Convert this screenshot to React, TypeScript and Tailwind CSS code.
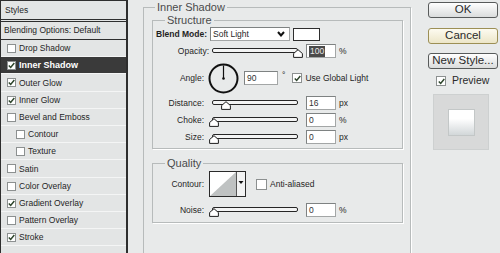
import React from 'react';

type Row = { label: string; checked?: boolean; active?: boolean; indent?: boolean };

const rows: Row[] = [
  { label: 'Drop Shadow' },
  { label: 'Inner Shadow', checked: true, active: true },
  { label: 'Outer Glow', checked: true },
  { label: 'Inner Glow', checked: true },
  { label: 'Bevel and Emboss' },
  { label: 'Contour', indent: true },
  { label: 'Texture', indent: true },
  { label: 'Satin' },
  { label: 'Color Overlay' },
  { label: 'Gradient Overlay', checked: true },
  { label: 'Pattern Overlay' },
  { label: 'Stroke', checked: true },
];

const Check = ({ checked, size = 'w-[9px] h-[9px]' }: { checked?: boolean; size?: string }) => (
  <span className={`${size} shrink-0 border border-[#8c9090] bg-white flex items-center justify-center`}>
    {checked && (
      <svg width="7" height="7" viewBox="0 0 7 7">
        <path d="M0.8 3.4 L2.7 5.4 L6.3 1.1" stroke="#2d452b" strokeWidth="1.5" fill="none" />
      </svg>
    )}
  </span>
);

// track is 86px wide, thumb class places the little house-shaped knob
const Slider = ({ thumb }: { thumb: string }) => (
  <div className="relative w-[86px] h-[14px] shrink-0">
    <div className="absolute left-0 right-0 top-[4px] h-[5px] border border-[#262626] rounded-[2px] bg-[#f3f4f4]" />
    <svg className={`absolute top-[5px] ${thumb}`} width="10" height="9" viewBox="0 0 10 9">
      <path d="M5 0.7 L9.4 4.5 L9.4 8.4 L0.6 8.4 L0.6 4.5 Z" fill="#fff" stroke="#1e1e1e" strokeWidth="1" />
    </svg>
  </div>
);

const Field = ({ value, w = 'w-[30px]', selected }: { value: string; w?: string; selected?: boolean }) => (
  <div className={`${w} h-[14px] shrink-0 bg-white border border-[#a3a6a6] border-t-[#7e8282] border-l-[#7e8282] flex items-center pl-[2px] text-[8.5px]`}>
    {selected ? <span className="bg-[#4a4a4a] text-[#e8e8e8] px-[1px] leading-[11px]">{value}</span> : <span className="text-[#333]">{value}</span>}
  </div>
);

const Label = ({ text, w = 'w-[51px]', bold }: { text: string; w?: string; bold?: boolean }) => (
  <span className={`${w} shrink-0 text-right text-[8.5px] ${bold ? 'font-bold' : ''}`}>{text}</span>
);

const Btn = ({ children, cancel }: { children: React.ReactNode; cancel?: boolean }) => (
  <div
    className={`h-[16px] w-[70px] rounded-[3px] border flex items-center justify-center text-[11.5px] leading-none text-[#2a2a2a] ${
      cancel
        ? 'border-[#9c8f55] bg-linear-to-b from-[#fdfbf0] to-[#ece6c8]'
        : 'border-[#585b5b] bg-linear-to-b from-white to-[#dadcdc]'
    }`}
  >
    {children}
  </div>
);

export default function App() {
  return (
    <div className="w-[500px] h-[253px] overflow-hidden bg-[#e8eaea] flex font-['Liberation_Sans',Arial,sans-serif] text-[#1f1f1f]">
      {/* styles list */}
      <div className="w-[128px] h-full shrink-0 border-l border-t border-r-2 border-[#2e2e2e] bg-[#e3e5e5] flex flex-col">
        <div className="h-[21px] px-[4px] flex items-center text-[8.5px] border-b-[3px] border-double border-[#2e2e2e]">Styles</div>
        <div className="h-[18px] px-[3px] flex items-center text-[8.5px] border-b border-[#2e2e2e]">Blending Options: Default</div>
        {rows.map((r) => (
          <div
            key={r.label}
            className={`h-[17.2px] flex items-center shadow-[inset_0_-1px_0_#f4f5f5] ${r.indent ? 'pl-[15px]' : 'pl-[6px]'} ${
              r.active ? 'bg-[#3a3a3a] text-white font-bold text-[9px]' : 'text-[8.5px]'
            }`}
          >
            <Check checked={r.checked} />
            <span className={r.active ? 'ml-[3px]' : 'ml-[3px]'}>{r.label}</span>
          </div>
        ))}
      </div>

      {/* settings */}
      <fieldset className="ml-[15px] mt-[1px] w-[268px] h-[270px] shrink-0 border border-[#b7bbbb] shadow-[1px_1px_0_#fff]">
        <legend className="ml-[11px] px-[2px] text-[11px] leading-[13px] text-[#4a4a4a]">Inner Shadow</legend>

        <fieldset className="ml-[8px] w-[251px] pb-[4px] border border-[#b7bbbb] shadow-[1px_1px_0_#fff]">
          <legend className="ml-[12px] px-[2px] text-[11px] leading-[13px] text-[#4a4a4a]">Structure</legend>

          <div className="flex items-center h-[14px]">
            <Label text="Blend Mode:" w="w-[54px]" bold />
            <div className="ml-[3px] w-[80px] h-[14px] shrink-0 bg-white border border-[#a3a6a6] border-t-[#7e8282] border-l-[#7e8282] flex items-center justify-between pl-[2px] pr-[4px] text-[8.5px]">
              <span>Soft Light</span>
              <svg width="8" height="6" viewBox="0 0 8 6">
                <path d="M1 1 L4 4.5 L7 1" stroke="#111" strokeWidth="2" fill="none" />
              </svg>
            </div>
            <div className="ml-[3px] w-[27px] h-[13px] shrink-0 bg-white border border-[#2e2e2e]" />
          </div>

          <div className="flex items-center h-[14px] mt-[3px]">
            <Label text="Opacity:" w="w-[56px]" />
            <div className="ml-[3px]">
              <Slider thumb="left-[81px]" />
            </div>
            <div className="ml-[8px]">
              <Field value="100" selected />
            </div>
            <span className="ml-[3px] text-[8.5px]">%</span>
          </div>

          <div className="flex items-center h-[34px] mt-[3px]">
            <Label text="Angle:" />
            <svg className="ml-[4px] shrink-0" width="31" height="31" viewBox="0 0 31 31">
              <circle cx="15.5" cy="15.5" r="14" fill="none" stroke="#111" strokeWidth="2" />
              <line x1="15.5" y1="15.5" x2="15.5" y2="2.5" stroke="#111" strokeWidth="1.2" />
              <circle cx="15.5" cy="15.5" r="1.3" fill="#111" />
            </svg>
            <div className="ml-[5px]">
              <Field value="90" w="w-[34px]" />
            </div>
            <span className="ml-[4px] self-start mt-[8px] text-[8.5px]">°</span>
            <div className="ml-[7px]">
              <Check checked size="w-[10px] h-[10px]" />
            </div>
            <span className="ml-[3px] text-[8.5px]">Use Global Light</span>
          </div>

          <div className="flex items-center h-[14px] mt-[1px]">
            <Label text="Distance:" />
            <div className="ml-[8px]">
              <Slider thumb="left-[9px]" />
            </div>
            <div className="ml-[8px]">
              <Field value="16" />
            </div>
            <span className="ml-[3px] text-[8.5px]">px</span>
          </div>

          <div className="flex items-center h-[14px] mt-[3px]">
            <Label text="Choke:" />
            <div className="ml-[8px]">
              <Slider thumb="left-[-3px]" />
            </div>
            <div className="ml-[8px]">
              <Field value="0" />
            </div>
            <span className="ml-[3px] text-[8.5px]">%</span>
          </div>

          <div className="flex items-center h-[14px] mt-[3px]">
            <Label text="Size:" />
            <div className="ml-[8px]">
              <Slider thumb="left-[-3px]" />
            </div>
            <div className="ml-[8px]">
              <Field value="0" />
            </div>
            <span className="ml-[3px] text-[8.5px]">px</span>
          </div>
        </fieldset>

        <fieldset className="ml-[8px] mt-[8px] w-[251px] pt-[1px] pb-[5px] border border-[#b7bbbb] shadow-[1px_1px_0_#fff]">
          <legend className="ml-[12px] px-[2px] text-[11px] leading-[13px] text-[#4a4a4a]">Quality</legend>

          <div className="flex items-center h-[26px]">
            <Label text="Contour:" />
            <svg className="ml-[5px] shrink-0" width="37" height="26" viewBox="0 0 37 26">
              <rect x="0.5" y="0.5" width="36" height="25" fill="#fff" stroke="#2a2a2a" />
              <polygon points="1,25 27,1 27,25" fill="#bfc2c2" />
              <line x1="27.5" y1="1" x2="27.5" y2="25" stroke="#555" />
              <rect x="28" y="1" width="8" height="24" fill="#f2f3f3" />
              <polygon points="29.5,10 34.5,10 32,13" fill="#111" />
            </svg>
            <div className="ml-[10px]">
              <Check size="w-[11px] h-[11px]" />
            </div>
            <span className="ml-[3px] text-[8.5px]">Anti-aliased</span>
          </div>

          <div className="flex items-center h-[14px] mt-[6px]">
            <Label text="Noise:" />
            <div className="ml-[8px]">
              <Slider thumb="left-[-3px]" />
            </div>
            <div className="ml-[8px]">
              <Field value="0" />
            </div>
            <span className="ml-[3px] text-[8.5px]">%</span>
          </div>
        </fieldset>
      </fieldset>

      {/* buttons */}
      <div className="ml-[17px] w-[70px] shrink-0 flex flex-col">
        <div className="mt-[2px]">
          <Btn>OK</Btn>
        </div>
        <div className="mt-[10px]">
          <Btn cancel>Cancel</Btn>
        </div>
        <div className="mt-[9px]">
          <Btn>New Style...</Btn>
        </div>
        <div className="mt-[6px] ml-[8px] h-[12px] flex items-center">
          <Check checked size="w-[10px] h-[10px]" />
          <span className="ml-[6px] text-[10.5px] text-[#2a2a2a]">Preview</span>
        </div>
        <div className="mt-[7px] ml-[5px] w-[56px] h-[56px] bg-[#d8d9d9] border border-[#cdd0d0] flex items-center justify-center">
          <div className="w-[27px] h-[27px] border border-[#c3c7c7] bg-linear-to-b from-white from-35% to-[#d2d7d9]" />
        </div>
      </div>
    </div>
  );
}
